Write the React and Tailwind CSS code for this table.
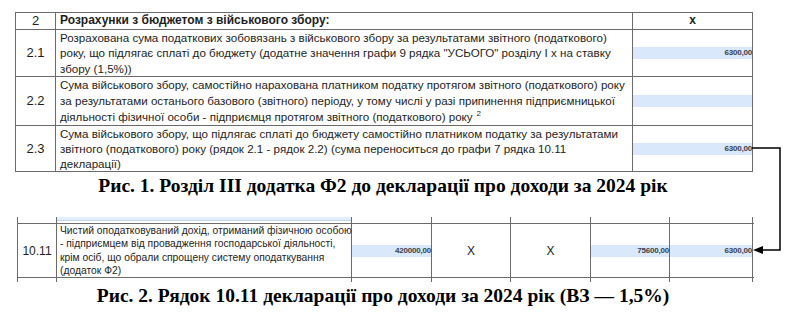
export default function App() {
  const cell = "border-r border-b border-[#6b6b6b]";
  const val = "text-[8px] font-bold text-[#3a3f4a] tracking-tight";
  const blue = "bg-[#d9e8fb]";
  const serif = { fontFamily: '"Liberation Serif", "Times New Roman", serif' };
  const cols = "grid grid-cols-[40px_295px_80px_79px_80px_79px_83px]";
  return (
    <div className="relative w-[795px] h-[312px] bg-white overflow-hidden text-[#1e1e1e]" style={{ fontFamily: '"Liberation Sans", Arial, sans-serif' }}>
      {/* Table 1 */}
      <div className="ml-[15px] mt-[12px] w-[738px] grid grid-cols-[40px_577px_120px] border-l border-t border-[#6b6b6b] text-[11.6px] leading-[15.5px]">
        <div className={`${cell} h-[17px] flex items-center justify-center text-[13px]`}>2</div>
        <div className={`${cell} h-[17px] flex items-center pl-[4px] font-bold text-[12px]`}>Розрахунки з бюджетом з військового збору:</div>
        <div className={`${cell} h-[17px] flex items-center justify-center font-bold text-[12px]`}>x</div>

        <div className={`${cell} h-[47px] flex items-center justify-center text-[13px]`}>2.1</div>
        <div className={`${cell} h-[47px] flex items-center pl-[4px] pr-[4px]`}>
          <p>Розрахована сума податкових зобовязань з військового збору за результатами звітного (податкового) року, що підлягає сплаті до бюджету (додатне значення графи 9 рядка "УСЬОГО" розділу I х на ставку збору (1,5%))</p>
        </div>
        <div className={`${cell} h-[47px] flex items-center`}>
          <div className={`${blue} w-full h-[12px] flex items-center justify-end ${val}`}>6300,00</div>
        </div>

        <div className={`${cell} h-[49px] flex items-center justify-center text-[13px]`}>2.2</div>
        <div className={`${cell} h-[49px] flex items-center pl-[4px] pr-[4px]`}>
          <p className="leading-[16px]">Сума військового збору, самостійно нарахована платником податку протягом звітного (податкового) року за результатами останього базового (звітного) періоду, у тому числі у разі припинення підприємницької діяльності фізичної особи - підприємця протягом звітного (податкового) року<span className="ml-[4px] text-[8px] leading-none align-[5px]">2</span></p>
        </div>
        <div className={`${cell} h-[49px] flex items-center`}>
          <div className={`${blue} w-full h-[12px]`}></div>
        </div>

        <div className={`${cell} h-[46px] flex items-center justify-center text-[13px]`}>2.3</div>
        <div className={`${cell} h-[46px] flex items-center pl-[4px] pr-[4px]`}>
          <p className="leading-[15px]">Сума військового збору, що підлягає сплаті до бюджету самостійно платником податку за результатами звітного (податкового) року (рядок 2.1 - рядок 2.2) (сума переноситься до графи 7 рядка 10.11 декларації)</p>
        </div>
        <div className={`${cell} h-[46px] flex items-center`}>
          <div className={`${blue} w-full h-[12px] flex items-center justify-end ${val}`}>6300,00</div>
        </div>
      </div>

      {/* Caption 1 */}
      <div className="w-[766px] mt-[3px] text-center font-bold text-[19.5px] leading-[22px] text-black" style={serif}>
        Рис. 1. Розділ III додатка Ф2 до декларації про доходи за 2024 рік
      </div>

      {/* Table 2 */}
      <div className="ml-[17px] mt-[20px] w-[737px] h-[65px] overflow-hidden flex flex-col">
        <div className={`h-[7px] shrink-0 ${cols} border-b border-[#6b6b6b]`}>
          <div className="border-l border-r border-[#6b6b6b]"></div>
          <div className="border-r border-[#6b6b6b] flex flex-col"><div className="h-[4px] bg-[#e3eefb] border-b border-[#c8d6e8]"></div></div>
          <div className="border-r border-[#6b6b6b]"></div>
          <div className="border-r border-[#6b6b6b]"></div>
          <div className="border-r border-[#6b6b6b]"></div>
          <div className="border-r border-[#6b6b6b]"></div>
          <div className="border-r border-[#6b6b6b]"></div>
        </div>
        <div className={`h-[54px] shrink-0 ${cols} border-b border-[#6b6b6b] text-[10.3px]`}>
          <div className="border-l border-r border-[#6b6b6b] flex items-center justify-center text-[12px]">10.11</div>
          <div className="border-r border-[#6b6b6b] pl-[3px] flex flex-col justify-center leading-[13.4px] whitespace-nowrap">
            <span>Чистий оподатковуваний дохід, отриманий фізичною особою</span>
            <span>- підприємцем від провадження господарської діяльності,</span>
            <span>крім осіб, що обрали спрощену систему оподаткування</span>
            <span>(додаток Ф2)</span>
          </div>
          <div className="border-r border-[#6b6b6b] flex items-center">
            <div className={`${blue} w-full h-[12px] flex items-center justify-end ${val}`}>420000,00</div>
          </div>
          <div className="border-r border-[#6b6b6b] flex items-center justify-center text-[12px]">X</div>
          <div className="border-r border-[#6b6b6b] flex items-center justify-center text-[12px]">X</div>
          <div className="border-r border-[#6b6b6b] flex items-center">
            <div className={`${blue} w-full h-[12px] flex items-center justify-end ${val}`}>75600,00</div>
          </div>
          <div className="border-r border-[#6b6b6b] flex items-center">
            <div className={`${blue} w-full h-[12px] flex items-center justify-end ${val}`}>6300,00</div>
          </div>
        </div>
        <div className={`h-[4px] shrink-0 ${cols}`}>
          <div className="border-l border-r border-[#6b6b6b]"></div>
          <div className="border-r border-[#6b6b6b]"></div>
          <div className="border-r border-[#6b6b6b]"></div>
          <div className="border-r border-[#6b6b6b]"></div>
          <div className="border-r border-[#6b6b6b]"></div>
          <div className="border-r border-[#6b6b6b]"></div>
          <div className="border-r border-[#6b6b6b]"></div>
        </div>
      </div>

      {/* Caption 2 */}
      <div className="w-[766px] mt-[3px] text-center font-bold text-[19.5px] leading-[22px] text-black" style={serif}>
        Рис. 2. Рядок 10.11 декларації про доходи за 2024 рік (ВЗ — 1,5%)
      </div>

      {/* Connector arrow */}
      <svg className="absolute left-0 top-0 pointer-events-none" width="795" height="312">
        <polyline points="752,148 780,148 780,250 762,250" fill="none" stroke="#000" strokeWidth="1.5" />
        <polygon points="753,250 763,246 763,254" fill="#000" />
      </svg>
    </div>
  );
}
